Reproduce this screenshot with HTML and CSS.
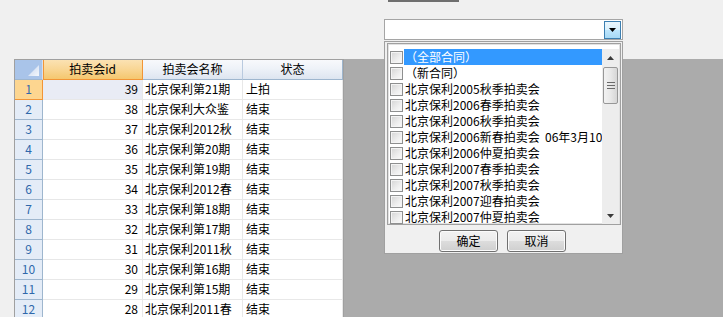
FILE: index.html
```html
<!DOCTYPE html>
<html>
<head>
<meta charset="utf-8">
<link rel="stylesheet" href="styles.css">
</head>
<body>
<div class="app">
  <div class="top">
    <div class="stub"></div>
    <div class="combo">
      <div class="combo-btn">
        <svg width="7" height="4" viewBox="0 0 7 4"><path d="M0 0H7L3.5 4Z" fill="#000"/></svg>
      </div>
    </div>
  </div>
  <div class="workspace">
    <div class="grid">
      <div class="corner"><span class="tri"></span></div>
      <div class="colhead sel">拍卖会id</div>
      <div class="colhead">拍卖会名称</div>
      <div class="colhead last">状态</div>

      <div class="rowhead sel">1</div><div class="cell num cur">39</div><div class="cell name">北京保利第21期</div><div class="cell stat">上拍</div>
      <div class="rowhead">2</div><div class="cell num">38</div><div class="cell name">北京保利大众鉴</div><div class="cell stat">结束</div>
      <div class="rowhead">3</div><div class="cell num">37</div><div class="cell name">北京保利2012秋</div><div class="cell stat">结束</div>
      <div class="rowhead">4</div><div class="cell num">36</div><div class="cell name">北京保利第20期</div><div class="cell stat">结束</div>
      <div class="rowhead">5</div><div class="cell num">35</div><div class="cell name">北京保利第19期</div><div class="cell stat">结束</div>
      <div class="rowhead">6</div><div class="cell num">34</div><div class="cell name">北京保利2012春</div><div class="cell stat">结束</div>
      <div class="rowhead">7</div><div class="cell num">33</div><div class="cell name">北京保利第18期</div><div class="cell stat">结束</div>
      <div class="rowhead">8</div><div class="cell num">32</div><div class="cell name">北京保利第17期</div><div class="cell stat">结束</div>
      <div class="rowhead">9</div><div class="cell num">31</div><div class="cell name">北京保利2011秋</div><div class="cell stat">结束</div>
      <div class="rowhead">10</div><div class="cell num">30</div><div class="cell name">北京保利第16期</div><div class="cell stat">结束</div>
      <div class="rowhead">11</div><div class="cell num">29</div><div class="cell name">北京保利第15期</div><div class="cell stat">结束</div>
      <div class="rowhead">12</div><div class="cell num">28</div><div class="cell name">北京保利2011春</div><div class="cell stat">结束</div>
    </div>
  </div>

  <div class="popup">
    <div class="listbox">
      <div class="items">
        <div class="item"><span class="chk"></span><span class="label hl">（全部合同）</span></div>
        <div class="item"><span class="chk"></span><span class="label">（新合同）</span></div>
        <div class="item"><span class="chk"></span><span class="label">北京保利2005秋季拍卖会</span></div>
        <div class="item"><span class="chk"></span><span class="label">北京保利2006春季拍卖会</span></div>
        <div class="item"><span class="chk"></span><span class="label">北京保利2006秋季拍卖会</span></div>
        <div class="item"><span class="chk"></span><span class="label">北京保利2006新春拍卖会  06年3月10日</span></div>
        <div class="item"><span class="chk"></span><span class="label">北京保利2006仲夏拍卖会</span></div>
        <div class="item"><span class="chk"></span><span class="label">北京保利2007春季拍卖会</span></div>
        <div class="item"><span class="chk"></span><span class="label">北京保利2007秋季拍卖会</span></div>
        <div class="item"><span class="chk"></span><span class="label">北京保利2007迎春拍卖会</span></div>
        <div class="item"><span class="chk"></span><span class="label">北京保利2007仲夏拍卖会</span></div>
      </div>
      <div class="scrollbar">
        <div class="sb-btn">
          <svg width="7" height="4" viewBox="0 0 7 4"><path d="M3.5 0L7 4H0Z" fill="#3a3a3a"/></svg>
        </div>
        <div class="thumb">
          <svg width="8" height="7" viewBox="0 0 8 7"><path d="M0 .5H8M0 3.5H8M0 6.5H8" stroke="#6a6a6a" stroke-width="1"/></svg>
        </div>
        <div class="sb-track"></div>
        <div class="sb-btn">
          <svg width="7" height="4" viewBox="0 0 7 4"><path d="M0 0H7L3.5 4Z" fill="#3a3a3a"/></svg>
        </div>
      </div>
    </div>
    <div class="actions">
      <div class="btn">确定</div>
      <div class="btn">取消</div>
    </div>
  </div>
</div>
</body>
</html>
```

FILE: styles.css
```css
html, body {
  margin: 0;
  padding: 0;
}
body {
  width: 723px;
  height: 317px;
  overflow: hidden;
  background: #f0f0f0;
  font-family: "Noto Sans CJK SC", "Liberation Sans", sans-serif;
  font-size: 12px;
  color: #000;
}
.app {
  position: relative;
  width: 723px;
  height: 317px;
}
.top {
  height: 59px;
  display: flex;
  flex-direction: column;
}
.stub {
  margin-left: 388px;
  width: 71px;
  height: 2px;
  background: #6f6f6f;
}
.combo {
  margin: 17px 0 0 384px;
  width: 239px;
  height: 21px;
  box-sizing: border-box;
  border: 1px solid #a5a5a5;
  background: #fff;
  display: flex;
  justify-content: flex-end;
  padding: 1px 1px 0 0;
}
.combo-btn {
  width: 17px;
  height: 18px;
  box-sizing: border-box;
  border: 1px solid #3c7fb1;
  background: linear-gradient(#eaf6fd 0%, #d9f0fc 50%, #bee6fd 50%, #a7d9f5 100%);
  display: flex;
  align-items: center;
  justify-content: center;
}
.workspace {
  margin-left: 14px;
  height: 258px;
  background: #ababab;
  overflow: hidden;
}
.grid {
  display: grid;
  grid-template-columns: 28px 100px 100px 100px;
  grid-auto-rows: 20px;
  width: 330px;
  box-sizing: border-box;
  border-left: 1px solid #a0a0a0;
  border-top: 1px solid #a0a0a0;
  border-right: 1px solid #a0a0a0;
  background: #fff;
}
.grid > div {
  box-sizing: border-box;
  line-height: 18px;
  white-space: nowrap;
  overflow: hidden;
}
.corner {
  position: relative;
  background: #a9c4e9;
  border-right: 1px solid #d5e0ef;
  border-bottom: 1px solid #9eb6ce;
}
.tri {
  position: absolute;
  right: 3px;
  bottom: 3px;
  width: 11px;
  height: 11px;
  background: linear-gradient(135deg, #c3d5ee 0%, #f4f7fc 100%);
  clip-path: polygon(100% 0, 100% 100%, 0 100%);
}
.colhead {
  text-align: center;
  background: linear-gradient(#f8f9fc 0%, #eef2f8 45%, #dde5f0 100%);
  border-right: 1px solid #b9cadf;
  border-bottom: 1px solid #9eb6ce;
}
.colhead.last {
  border-right-color: #9eb6ce;
}
.colhead.sel {
  background: linear-gradient(#fbe2b3 0%, #f9d797 45%, #f5c76e 100%);
  border-right: 1px solid #f29536;
  border-bottom: 1px solid #f29536;
  box-shadow: inset 1px 0 0 #f29536;
}
.rowhead {
  text-align: center;
  color: #2f68ab;
  background: #e4ecf7;
  border-right: 1px solid #9eb6ce;
  border-bottom: 1px solid #9eb6ce;
}
.rowhead.sel {
  background: #fdd690;
  border-right-color: #f29536;
  border-bottom-color: #f29536;
}
.cell {
  border-right: 1px solid #e8e8e8;
  border-bottom: 1px solid #e8e8e8;
}
.cell.num {
  text-align: right;
  padding-right: 4px;
}
.cell.cur {
  background: #e9ecf5;
}
.cell.name {
  padding-left: 2px;
}
.cell.stat {
  padding-left: 3px;
}

.popup {
  position: absolute;
  left: 384px;
  top: 41px;
  width: 239px;
  height: 213px;
  box-sizing: border-box;
  border: 1px solid #a0a0a0;
  background: #f0f0f0;
  padding: 1px 0 0 2px;
}
.listbox {
  width: 234px;
  height: 182px;
  box-sizing: border-box;
  border: 1px solid #a0a0a0;
  box-shadow: inset 0 0 0 1px #e2e2e2;
  background: #fff;
  padding: 5px 2px 0 1px;
  display: flex;
}
.items {
  width: 213px;
  display: flex;
  flex-direction: column;
}
.item {
  height: 16px;
  display: flex;
  align-items: center;
  padding-left: 1px;
}
.chk {
  flex: none;
  width: 13px;
  height: 13px;
  box-sizing: border-box;
  border: 1px solid #8e8f8f;
  background: linear-gradient(135deg, #d4d4d4 0%, #eeeeee 60%, #fbfbfb 100%);
  box-shadow: inset 0 0 0 1px #f4f4f4;
  margin-right: 1px;
}
.label {
  flex: 1;
  height: 16px;
  line-height: 15px;
  padding-left: 1px;
  white-space: pre;
  overflow: hidden;
}
.label.hl {
  background: #3399ff;
  color: #fff;
}
.scrollbar {
  width: 17px;
  height: 175px;
  background: #ededed;
  display: flex;
  flex-direction: column;
  align-items: center;
}
.sb-btn {
  width: 17px;
  height: 17px;
  display: flex;
  align-items: center;
  justify-content: center;
  flex: none;
}
.thumb {
  margin-top: 1px;
  width: 15px;
  height: 37px;
  box-sizing: border-box;
  border: 1px solid #979797;
  border-radius: 2px;
  background: linear-gradient(90deg, #f2f2f2 0%, #e8e8e8 50%, #d6d6d6 100%);
  display: flex;
  align-items: center;
  justify-content: center;
  flex: none;
}
.sb-track {
  flex: 1;
}
.actions {
  display: flex;
  justify-content: center;
  gap: 9px;
  margin-top: 5px;
  padding-right: 4px;
}
.btn {
  width: 59px;
  height: 22px;
  box-sizing: border-box;
  border: 1px solid #707070;
  border-radius: 3px;
  background: linear-gradient(#f2f2f2 0%, #ebebeb 50%, #dddddd 50%, #cfcfcf 100%);
  box-shadow: inset 0 0 0 1px #fbfbfb;
  text-align: center;
  line-height: 19px;
}
```
